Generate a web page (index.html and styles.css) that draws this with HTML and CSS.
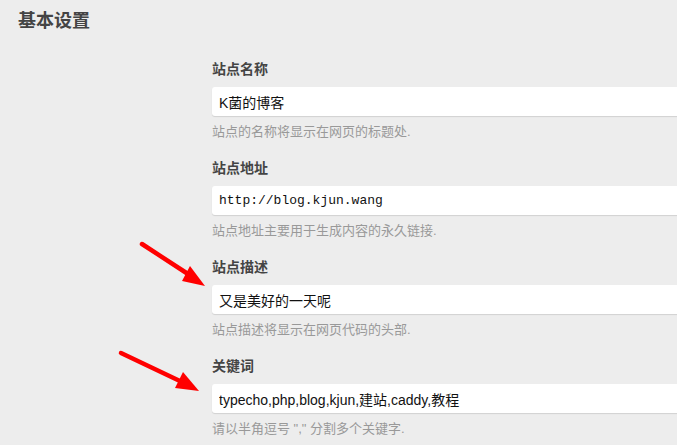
FILE: index.html
```html
<!DOCTYPE html>
<html lang="zh-CN">
<head>
  <meta charset="UTF-8">
  <title>基本设置</title>
  <link rel="stylesheet" href="styles.css">
</head>
<body>
  <div class="page">
    <h2 class="title">基本设置</h2>

    <form class="options">
      <div class="option">
        <label class="label">站点名称</label>
        <input class="text" type="text" value="K菌的博客">
        <p class="desc">站点的名称将显示在网页的标题处.</p>
      </div>
      <div class="option">
        <label class="label">站点地址</label>
        <input class="text mono" type="text" value="http://blog.kjun.wang">
        <p class="desc">站点地址主要用于生成内容的永久链接.</p>
      </div>
      <div class="option">
        <label class="label">站点描述</label>
        <input class="text" type="text" value="又是美好的一天呢">
        <p class="desc">站点描述将显示在网页代码的头部.</p>
      </div>
      <div class="option">
        <label class="label">关键词</label>
        <input class="text latin" type="text" value="typecho,php,blog,kjun,建站,caddy,教程">
        <p class="desc">请以半角逗号 "," 分割多个关键字.</p>
      </div>
    </form>

    <!-- red annotation arrows drawn over the screenshot -->
    <svg class="marks" width="677" height="445" viewBox="0 0 677 445">
      <line x1="142" y1="244" x2="188" y2="274" stroke="#ff0000" stroke-width="4.5" stroke-linecap="round"/>
      <polygon points="190,266 182,281 205,286" fill="#ff0000"/>
      <line x1="121" y1="353" x2="182" y2="382" stroke="#ff0000" stroke-width="4.5" stroke-linecap="round"/>
      <polygon points="183,372 175,388 199,391" fill="#ff0000"/>
    </svg>
  </div>
</body>
</html>
```

FILE: styles.css
```css
html, body {
  margin: 0;
  padding: 0;
  height: 100%;
  overflow: hidden;
  background-color: #EDEDED;
  font-family: "Liberation Sans", "Noto Sans CJK SC", sans-serif;
  color: #444;
}

.page {
  position: relative;
  height: 100%;
}

.title {
  margin: 0;
  padding: 7px 0 0 18px;
  font-size: 18px;
  line-height: 28px;
  font-weight: bold;
  color: #444;
}

.options {
  margin: 24px 0 0 212px;
  width: 520px;
}

.option {
  display: flex;
  flex-direction: column;
  margin-bottom: 16px;
}

.label {
  font-size: 14px;
  line-height: 20px;
  font-weight: bold;
  color: #444;
}

.text {
  box-sizing: border-box;
  margin-top: 8px;
  height: 29px;
  width: 100%;
  padding: 0 7px;
  border: none;
  border-radius: 3px;
  background: #fff;
  box-shadow: 0 1px 1px rgba(0, 0, 0, 0.12);
  font-family: "Liberation Sans", "Noto Sans CJK SC", sans-serif;
  font-size: 14px;
  color: #111;
  outline: none;
}

.text.mono {
  font-family: "Liberation Mono", "Noto Sans CJK SC", monospace;
  font-size: 13px;
}

.text.latin {
  font-size: 14px;
}

.desc {
  margin: 6px 0 0;
  font-size: 13px;
  line-height: 20px;
  color: #999;
}

.marks {
  position: absolute;
  left: 0;
  top: 0;
  pointer-events: none;
}
```
